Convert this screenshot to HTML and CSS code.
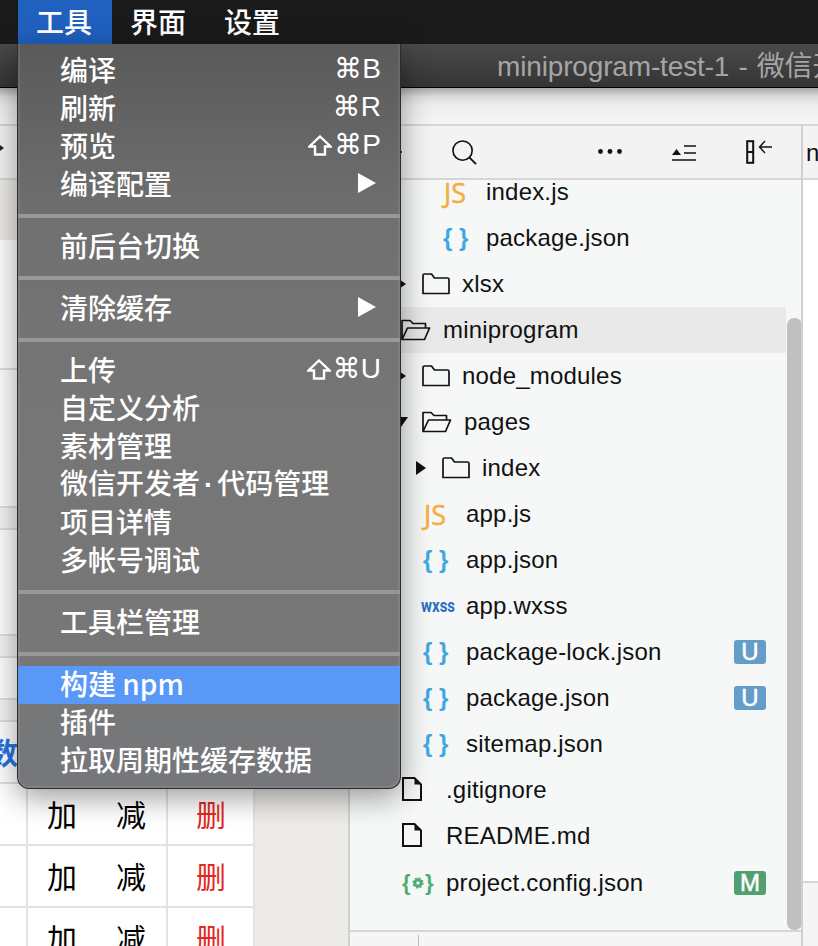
FILE: index.html
```html
<!DOCTYPE html>
<html lang="zh-CN">
<head>
<meta charset="utf-8">
<title>miniprogram-test-1</title>
<link rel="stylesheet" href="styles.css">
</head>
<body>
<div class="app">
  <header class="menubar">
    <span class="menubar-item menubar-active">工具</span>
    <span class="menubar-item">界面</span>
    <span class="menubar-item">设置</span>
  </header>
  <div class="titlebar"><span class="title">miniprogram-test-1 - 微信开发者工具</span></div>
  <div class="topband"></div>
  <main class="workspace">
    <section class="leftpane">
      <div class="lefttool"><span class="lefttool-mark"></span></div>
      <div class="sim">
        <div class="simrow sr-head"></div>
        <div class="simrow sr-a"></div>
        <div class="simrow sr-b"></div>
        <div class="simrow sr-c"></div>
        <div class="simrow sr-d"></div>
        <div class="simrow sr-c"></div>
        <div class="simrow sr-e"></div>
        <div class="simrow sr-c"></div>
        <div class="simrow sr-g"><span class="sumtext">数</span></div>
        <div class="tablerow"><span class="tc-idx"></span><span class="tc-op"><span>加</span><span>减</span></span><span class="tc-del">删</span></div>
        <div class="tablerow"><span class="tc-idx"></span><span class="tc-op"><span>加</span><span>减</span></span><span class="tc-del">删</span></div>
        <div class="tablerow"><span class="tc-idx"></span><span class="tc-op"><span>加</span><span>减</span></span><span class="tc-del">删</span></div>
      </div>
    </section>
    <section class="treepane">
      <div class="treetool">
        <span class="tool-tick"></span>
        <svg class="ti ti-search" viewBox="0 0 26 26"><circle cx="11" cy="11" r="10" fill="none" stroke="#111" stroke-width="1.700"/><path d="M18 18l7 7" stroke="#111" stroke-width="1.900" fill="none"/></svg>
        <svg class="ti ti-dots" viewBox="0 0 24 5"><circle cx="2.500" cy="2.500" r="2.400" fill="#111"/><circle cx="12" cy="2.500" r="2.400" fill="#111"/><circle cx="21.500" cy="2.500" r="2.400" fill="#111"/></svg>
        <svg class="ti ti-collapse" viewBox="0 0 24 16"><path d="M0 10l4.500-6L9 10z" fill="#111"/><path d="M12 1h12M12 8h12M0 15h24" stroke="#111" stroke-width="1.500" fill="none"/></svg>
        <svg class="ti ti-side" viewBox="0 0 27 24"><rect x="1.200" y="1.200" width="6" height="21.600" fill="none" stroke="#111" stroke-width="2"/><path d="M1 12h6" stroke="#111" stroke-width="2"/><path d="M26 7H14M19 1l-5.500 6 5.500 6" stroke="#111" stroke-width="1.400" fill="none"/></svg>
      </div>
      <div class="treebody">
        <div class="treelist">
          <div class="row ind-js"><span class="ic-js">JS</span><span class="name">index.js</span></div>
          <div class="row ind-js"><span class="ic-json">{ }</span><span class="name">package.json</span></div>
          <div class="row ind-1f"><span class="arrow"></span><svg class="folder" viewBox="0 0 28 22"><path d="M1 20.500V2.500q0-1.500 1.500-1.500h7l3 4h13q1.500 0 1.500 1.500v14z" fill="none" stroke="#111" stroke-width="1.700" stroke-linejoin="round"/></svg><span class="name">xlsx</span></div>
          <div class="row ind-0f row-sel"><svg class="folder-open" viewBox="0 0 30 22"><path d="M1 20.500V1.500h8l3 3h12.500v4M1 20.500h22.500l5-11.500H6.500L1 20.500z" fill="none" stroke="#111" stroke-width="1.700" stroke-linejoin="round"/></svg><span class="name">miniprogram</span></div>
          <div class="row ind-1f"><span class="arrow"></span><svg class="folder" viewBox="0 0 28 22"><path d="M1 20.500V2.500q0-1.500 1.500-1.500h7l3 4h13q1.500 0 1.500 1.500v14z" fill="none" stroke="#111" stroke-width="1.700" stroke-linejoin="round"/></svg><span class="name">node_modules</span></div>
          <div class="row ind-1f"><span class="arrow arrow-down"></span><svg class="folder-open" viewBox="0 0 30 22"><path d="M1 20.500V1.500h8l3 3h12.500v4M1 20.500h22.500l5-11.500H6.500L1 20.500z" fill="none" stroke="#111" stroke-width="1.700" stroke-linejoin="round"/></svg><span class="name">pages</span></div>
          <div class="row ind-2f"><span class="arrow"></span><svg class="folder" viewBox="0 0 28 22"><path d="M1 20.500V2.500q0-1.500 1.500-1.500h7l3 4h13q1.500 0 1.500 1.500v14z" fill="none" stroke="#111" stroke-width="1.700" stroke-linejoin="round"/></svg><span class="name">index</span></div>
          <div class="row ind-2"><span class="ic-js">JS</span><span class="name">app.js</span></div>
          <div class="row ind-2"><span class="ic-json">{ }</span><span class="name">app.json</span></div>
          <div class="row ind-2"><span class="ic-wxss">wxss</span><span class="name">app.wxss</span></div>
          <div class="row ind-2"><span class="ic-json">{ }</span><span class="name">package-lock.json</span><span class="badge badge-u">U</span></div>
          <div class="row ind-2"><span class="ic-json">{ }</span><span class="name">package.json</span><span class="badge badge-u">U</span></div>
          <div class="row ind-2"><span class="ic-json">{ }</span><span class="name">sitemap.json</span></div>
          <div class="row ind-0"><svg class="file" viewBox="0 0 20 24"><path d="M1 1h11.500L19 7.500V23H1z" fill="none" stroke="#111" stroke-width="2"/><path d="M12.500 1v6.500H19z" fill="#111"/></svg><span class="name">.gitignore</span></div>
          <div class="row ind-0"><svg class="file" viewBox="0 0 20 24"><path d="M1 1h11.500L19 7.500V23H1z" fill="none" stroke="#111" stroke-width="2"/><path d="M12.500 1v6.500H19z" fill="#111"/></svg><span class="name">README.md</span></div>
          <div class="row ind-0 row-last"><span class="ic-config"><span>{</span><svg class="gear" viewBox="0 0 12 12"><circle cx="6" cy="6" r="3.200" fill="none" stroke="#4cae73" stroke-width="3"/><circle cx="6" cy="6" r="5" fill="none" stroke="#4cae73" stroke-width="1.400" stroke-dasharray="1.900 2.030"/></svg><span>}</span></span><span class="name">project.config.json</span><span class="badge badge-m">M</span></div>
        </div>
        <div class="scrollbar"></div>
      </div>
      <div class="treefoot"><span class="foot-tick"></span></div>
    </section>
    <section class="editor">
      <div class="editortabs"><span class="tabchar">n</span></div>
      <div class="editorbody"></div>
      <div class="editorfoot"></div>
    </section>
  </main>
</div>

<nav class="menu">
  <div class="mgroup">
    <div class="mi"><span>编译</span><span class="sc">⌘B</span></div>
    <div class="mi"><span>刷新</span><span class="sc">⌘R</span></div>
    <div class="mi"><span>预览</span><span class="sc"><svg class="shift" viewBox="0 0 24 21"><path d="M12 1.500L22.500 11.500H17V19.500H7V11.500H1.500z" fill="none" stroke="#fff" stroke-width="2.400"/></svg>⌘P</span></div>
    <div class="mi"><span>编译配置</span><svg class="sub" viewBox="0 0 18 20"><path d="M0 0l18 10L0 20z" fill="#fff"/></svg></div>
  </div>
  <div class="mgroup"><div class="mi"><span>前后台切换</span></div></div>
  <div class="mgroup"><div class="mi"><span>清除缓存</span><svg class="sub" viewBox="0 0 18 20"><path d="M0 0l18 10L0 20z" fill="#fff"/></svg></div></div>
  <div class="mgroup">
    <div class="mi"><span>上传</span><span class="sc"><svg class="shift" viewBox="0 0 24 21"><path d="M12 1.500L22.500 11.500H17V19.500H7V11.500H1.500z" fill="none" stroke="#fff" stroke-width="2.400"/></svg>⌘U</span></div>
    <div class="mi"><span>自定义分析</span></div>
    <div class="mi"><span>素材管理</span></div>
    <div class="mi"><span>微信开发者<span class="middot">·</span>代码管理</span></div>
    <div class="mi"><span>项目详情</span></div>
    <div class="mi"><span>多帐号调试</span></div>
  </div>
  <div class="mgroup mgroup-wide"><div class="mi"><span>工具栏管理</span></div></div>
  <div class="mgroup">
    <div class="mi mi-hover"><span>构建 npm</span></div>
    <div class="mi"><span>插件</span></div>
    <div class="mi"><span>拉取周期性缓存数据</span></div>
  </div>
</nav>
</body>
</html>
```

FILE: styles.css
```css
* { box-sizing: border-box; }
html, body { margin: 0; padding: 0; }
body {
  width: 818px;
  height: 946px;
  overflow: hidden;
  position: relative;
  background: #fff;
  font-family: "Liberation Sans", "Noto Sans CJK SC", sans-serif;
}
.app { display: flex; flex-direction: column; height: 946px; }

.menubar {
  height: 44px;
  padding-left: 18px;
  display: flex;
  background: #1a1a1b;
  color: #fff;
  font: 500 28px/42px "Noto Sans CJK SC", sans-serif;
  flex: none;
}
.menubar-item { padding-left: 18px; width: 94px; }
.menubar-active { background: #2060bf; }

.titlebar {
  height: 44px;
  flex: none;
  padding-left: 497px;
  background: linear-gradient(#4a4a4a, #343434);
  border-bottom: 1px solid #000;
  color: #a5a5a5;
  white-space: nowrap;
  overflow: hidden;
  font-size: 28px;
  line-height: 46px;
  letter-spacing: -0.15px;
  word-spacing: 1.5px;
}

.topband {
  height: 38px;
  flex: none;
  background: linear-gradient(#a8a8a8, #dcdcdc 25%, #eeeeee 50%, #f5f5f5);
  border-bottom: 2px solid #d6d6d6;
}

.workspace { flex: 1; display: flex; min-height: 0; }

.leftpane {
  width: 350px;
  flex: none;
  display: flex;
  flex-direction: column;
  border-right: 2px solid #d0d0d0;
  background: #ecebe8;
}
.lefttool { height: 54px; flex: none; background: #f3f3f3; border-bottom: 2px solid #d6d6d6; }
.lefttool-mark {
  display: block;
  width: 0;
  height: 0;
  position: relative;
  top: 19px;
  border-left: 4px solid #222;
  border-top: 3px solid transparent;
  border-bottom: 3px solid transparent;
}
.sim { width: 255px; background: #fff; flex: 1; overflow: hidden; }
.simrow { border-bottom: 2px solid #dfdfdf; background: #fff; }
.sr-head { height: 60px; background: #ecebe8; border-bottom: 0; }
.sr-a { height: 130px; }
.sr-b { height: 138px; }
.sr-c { height: 22px; background: #f4f4f4; }
.sr-d { height: 106px; }
.sr-e { height: 42px; }
.sr-g { height: 62px; font: bold 30px/58px "Noto Sans CJK SC", sans-serif; color: #2673e6; overflow: hidden; }
.sumtext { display: block; margin-left: -12px; }
.tablerow {
  display: flex;
  height: 62px;
  border-bottom: 2px solid #e2e2e2;
  font: 30px/58px "Noto Sans CJK SC", sans-serif;
  color: #000;
}
.tc-idx { width: 28px; border-right: 2px solid #e2e2e2; flex: none; }
.tc-op { width: 140px; flex: none; border-right: 2px solid #e2e2e2; display: flex; gap: 39px; padding-left: 19px; }
.tc-del { width: 87px; flex: none; border-right: 2px solid #e2e2e2; color: #e3281e; padding-left: 28px; }

.treepane {
  width: 453px;
  flex: none;
  display: flex;
  flex-direction: column;
  background: #f6f8f8;
  border-right: 2px solid #d0d0d0;
  min-height: 0;
}
.treetool {
  height: 54px;
  flex: none;
  background: #f3f3f3;
  border-bottom: 2px solid #d6d6d6;
  position: relative;
}
.tool-tick { position: absolute; left: 50px; top: 25px; width: 2px; height: 2px; background: #333; }
.ti { position: absolute; display: block; }
.ti-search { left: 102px; top: 14px; width: 25px; height: 25px; }
.ti-dots { left: 248px; top: 23px; width: 24px; height: 5px; }
.ti-collapse { left: 322px; top: 19px; width: 24px; height: 16px; }
.ti-side { left: 396px; top: 14px; width: 27px; height: 24px; }

.treebody { flex: 1; min-height: 0; position: relative; overflow: hidden; }
.treelist { margin-top: -11px; }
.row {
  height: 46px;
  display: flex;
  align-items: center;
  font-size: 24px;
  color: #111;
  position: relative;
  width: 436px;
  white-space: nowrap;
}
.row-sel { background: #e8e9e8; }
.row-last { margin-top: 1px; }
.ind-js { padding-left: 92px; }
.ind-2 { padding-left: 72px; }
.ind-0 { padding-left: 52px; }
.ind-0f { padding-left: 51px; }
.ind-1f { padding-left: 72px; }
.ind-2f { padding-left: 92px; }
.arrow {
  position: absolute;
  margin-left: -26px;
  width: 0;
  height: 0;
  border-left: 10px solid #111;
  border-top: 7px solid transparent;
  border-bottom: 7px solid transparent;
}
.arrow-down {
  margin-left: -28px;
  border-left: 7px solid transparent;
  border-right: 7px solid transparent;
  border-top: 10px solid #111;
  border-bottom: 0;
}
.folder { width: 28px; height: 22px; margin-right: 12px; flex: none; }
.folder-open { width: 30px; height: 22px; margin-right: 12px; flex: none; }
.file { width: 20px; height: 24px; margin-right: 24px; flex: none; margin-top: -2px; }
.ic-js {
  width: 43px;
  margin-right: 1px;
  flex: none;
  font: 27px/1 "Open Sans", sans-serif;
  -webkit-text-stroke: 0.5px #f5ad42;
  color: #f5ad42;
  padding-left: 2px;
}
.ic-json {
  width: 44px;
  flex: none;
  font: bold 24px/1 "Liberation Sans", sans-serif;
  color: #3fa7e3;
  padding-left: 1px;
}
.ic-wxss {
  width: 44px;
  flex: none;
  font: bold 15px/1 "Roboto", sans-serif;
  color: #2a6fc0;
  margin-left: -1px;
  margin-right: 1px;
  transform: scaleY(1.250);
  transform-origin: 0 50%;
}
.ic-config {
  width: 44px;
  flex: none;
  display: flex;
  align-items: center;
  gap: 1px;
  font: bold 22px/1 "Liberation Sans", sans-serif;
  color: #4cae73;
}
.ic-config span { width: 9px; }
.gear { width: 12px; height: 12px; }
.name { letter-spacing: 0.2px; }
.badge {
  position: absolute;
  left: 384px;
  width: 32px;
  height: 24px;
  border-radius: 3px;
  color: #fff;
  text-align: center;
  font-size: 24px;
  line-height: 24px;
  -webkit-text-stroke: 0.5px #fff;
}
.badge-u { background: #639dc8; }
.badge-m { background: #529f6f; }
.scrollbar {
  position: absolute;
  left: 437px;
  top: 138px;
  width: 15px;
  bottom: 0;
  background: #c0c0c0;
  border-radius: 7px;
}
.treefoot { height: 16px; flex: none; background: #f5f5f5; border-top: 2px solid #d6d6d6; position: relative; }
.foot-tick { position: absolute; left: 68px; top: 3px; width: 1px; height: 12px; background: #bbb; }

.editor { flex: 1; display: flex; flex-direction: column; min-width: 0; overflow: hidden; }
.editortabs { height: 54px; flex: none; background: #f3f3f3; border-bottom: 2px solid #d6d6d6; }
.tabchar { font-size: 24px; line-height: 54px; padding-left: 3px; color: #111; }
.editorbody { flex: 1; background: #fff; border-bottom: 2px solid #d6d6d6; }
.editorfoot { height: 63px; flex: none; background: #f5f5f5; }

.menu {
  position: absolute;
  left: 17px;
  top: 44px;
  width: 384px;
  height: 745px;
  padding-top: 7px;
  border: 1px solid #2c2c2c;
  border-top: 0;
  border-radius: 0 0 12px 12px;
  background: linear-gradient(#5a5a5a, #707070 24%, #767676 50%, #777 85%, #75777b);
  box-shadow: 0 8px 30px rgba(0, 0, 0, .4), inset 2px 0 0 rgba(255, 255, 255, .08), inset -2px -2px 0 rgba(255, 255, 255, .08);
  color: #fff;
  font: 500 28px/38px "Noto Sans CJK SC", sans-serif;
}
.mgroup { padding-bottom: 11px; border-bottom: 4px solid #989898; margin-bottom: 9px; }
.mgroup:last-child { border-bottom: 0; padding-bottom: 0; margin-bottom: 0; }
.mgroup-wide { margin-bottom: 10px; }
.mi { height: 38px; display: flex; justify-content: space-between; align-items: center; padding: 0 19px 2px 42px; }
.mgroup:last-child .mi { padding-bottom: 4px; }
.mi-hover { background: #5a98f8; }
.middot { font-family: "Liberation Sans", sans-serif; font-weight: bold; margin: 0 4px; }
.sc { font: 500 28px/36px "Liberation Sans", "DejaVu Sans", sans-serif; display: flex; align-items: center; gap: 2px; }
.shift { width: 24px; height: 21px; }
.sub { width: 18px; height: 20px; margin-right: 5px; }
```
